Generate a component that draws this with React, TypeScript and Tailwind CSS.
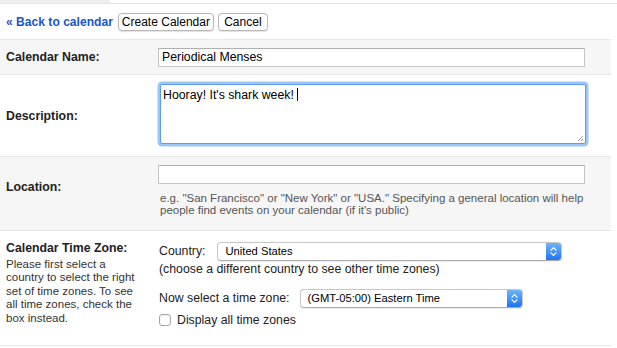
import clsx from "clsx";

const Stepper = () => (
    <svg width="7" height="11" viewBox="0 0 7 11" fill="none">
        <path d="M1 4.2 L3.5 1.6 L6 4.2" stroke="white" strokeWidth="1.2" strokeLinecap="round" strokeLinejoin="round" />
        <path d="M1 6.8 L3.5 9.4 L6 6.8" stroke="white" strokeWidth="1.2" strokeLinecap="round" strokeLinejoin="round" />
    </svg>
);

function MacSelect({ value, className }: { value: string; className: string }) {
    return (
        <div
            className={clsx(
                "flex h-[19px] items-stretch overflow-hidden rounded-[4px] border border-[#c8c8c8] border-b-[#acacac] bg-white shadow-[0_0.5px_1px_rgba(0,0,0,0.08)]",
                className
            )}
        >
            <span className="flex-1 pl-[7px] text-[11.2px] leading-[17px] text-black">{value}</span>
            <span className="flex w-[15px] items-center justify-center bg-gradient-to-b from-[#6db3fb] to-[#1d74f2]">
                <Stepper />
            </span>
        </div>
    );
}

function Label({ children }: { children: React.ReactNode }) {
    return <div className="text-[12.3px] font-bold leading-[14px] text-[#222]">{children}</div>;
}

export default function App() {
    return (
        <div className="h-[348px] w-[617px] overflow-hidden bg-white font-['Liberation_Sans',Arial,sans-serif] text-[#222]">
            {/* top strip */}
            <div className="h-[3px] w-[110px] bg-[#efefef]" />
            <div className="h-px bg-[#e6e6e6]" />

            {/* toolbar */}
            <div className="flex h-[35px] items-center pl-[6px] pt-[1px]">
                <a href="#" className="text-[12.1px] font-bold text-[#1a56c9] no-underline">
                    « Back to calendar
                </a>
                <button className="ml-[5px] h-[18px] w-[96px] rounded-[4px] border border-[#b9b9b9] bg-white text-[12px] leading-[16px] text-black shadow-[0_0.5px_1px_rgba(0,0,0,0.12)]">
                    Create Calendar
                </button>
                <button className="ml-[4px] h-[18px] w-[50px] rounded-[4px] border border-[#b9b9b9] bg-white text-[12px] leading-[16px] text-black shadow-[0_0.5px_1px_rgba(0,0,0,0.12)]">
                    Cancel
                </button>
            </div>

            {/* form table */}
            <div className="w-[611px] border-t border-[#e8e8e8]">
                {/* Calendar Name */}
                <div className="flex h-[34px] items-center bg-[#f6f6f6]">
                    <div className="w-[158px] shrink-0 pl-[6px]">
                        <Label>Calendar Name:</Label>
                    </div>
                    <div className="flex h-[19px] w-[427px] items-center border border-[#c4c4c4] border-t-[#b0b0b0] bg-white pl-[3px] text-[12.3px] text-black">
                        Periodical Menses
                    </div>
                </div>

                {/* Description */}
                <div className="flex h-[82px] items-center border-t border-[#e8e8e8] bg-white">
                    <div className="w-[158px] shrink-0 pl-[6px]">
                        <Label>Description:</Label>
                    </div>
                    <div className="relative mb-[4px] ml-[2px] h-[60px] w-[426px] rounded-[2px] border border-[#5e9ded] bg-white pl-[2px] pt-[1px] text-[12.3px] leading-[15px] text-black shadow-[0_0_0_2.5px_#9cc6f8]">
                        Hooray! It's shark week!
                        <span className="ml-[3px] inline-block h-[13px] w-px translate-y-[2px] bg-black" />
                        <svg className="absolute bottom-[1px] right-[1px]" width="7" height="7" viewBox="0 0 7 7">
                            <path d="M1 6 L6 1 M4 6 L6 4" stroke="#8a8a8a" strokeWidth="0.8" />
                        </svg>
                    </div>
                </div>

                {/* Location */}
                <div className="flex h-[74px] items-start border-t border-[#e8e8e8] bg-[#f6f6f6]">
                    <div className="w-[158px] shrink-0 pl-[6px] pt-[23px]">
                        <Label>Location:</Label>
                    </div>
                    <div className="flex flex-col pt-[8px]">
                        <div className="h-[19px] w-[427px] border border-[#c4c4c4] border-t-[#b0b0b0] bg-white" />
                        <p className="mt-[8px] w-[440px] pl-[2px] text-[11.5px] leading-[12px] text-[#555]">
                            e.g. "San Francisco" or "New York" or "USA." Specifying a general location will help people
                            find events on your calendar (if it's public)
                        </p>
                    </div>
                </div>

                {/* Calendar Time Zone */}
                <div className="flex h-[116px] items-start border-t border-[#e8e8e8] border-b bg-white">
                    <div className="w-[158px] shrink-0 pl-[6px] pt-[10px]">
                        <Label>Calendar Time Zone:</Label>
                        <p className="mt-[3px] w-[140px] text-[11.5px] leading-[13.4px] text-[#333]">
                            Please first select a country to select the right set of time zones. To see all time zones,
                            check the box instead.
                        </p>
                    </div>
                    <div className="flex flex-col pl-[1px] pt-[11px] text-[12.3px] text-[#222]">
                        <div className="flex items-center">
                            <span>Country:</span>
                            <MacSelect value="United States" className="ml-[12px] w-[345px]" />
                        </div>
                        <div className="mt-[1px] leading-[14px]">(choose a different country to see other time zones)</div>
                        <div className="mt-[13px] flex items-center">
                            <span>Now select a time zone:</span>
                            <MacSelect value="(GMT-05:00) Eastern Time" className="ml-[10px] w-[223px]" />
                        </div>
                        <label className="mt-[3px] flex items-center">
                            <span className="h-[12px] w-[12px] rounded-[3px] border border-[#a6a6a6] bg-white shadow-[inset_0_1px_1px_rgba(0,0,0,0.05)]" />
                            <span className="ml-[6px]">Display all time zones</span>
                        </label>
                    </div>
                </div>
            </div>
        </div>
    );
}
